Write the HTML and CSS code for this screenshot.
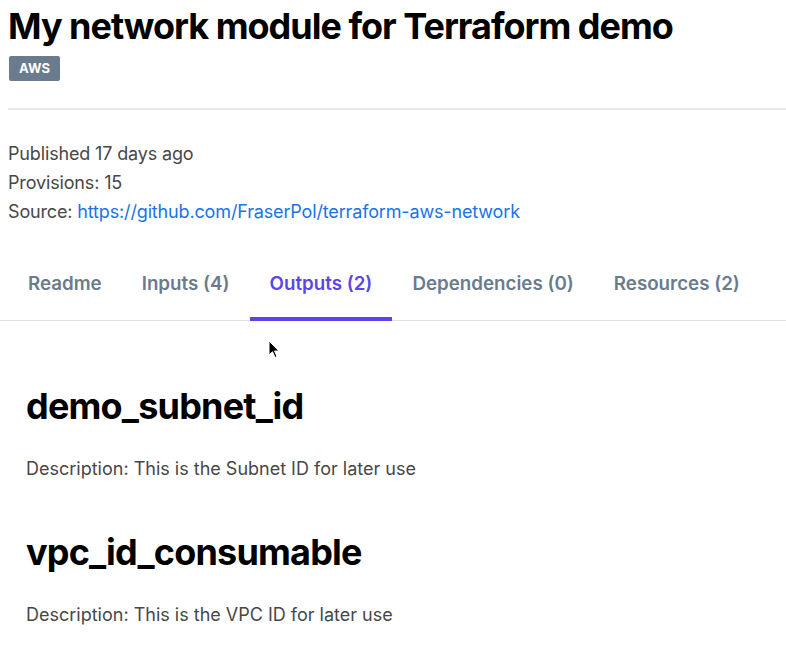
FILE: index.html
```html
<!DOCTYPE html>
<html lang="en">
<head>
<meta charset="utf-8">
<title>My network module for Terraform demo</title>
<link rel="stylesheet" href="styles.css">
</head>
<body>
<header class="head">
  <h1 class="title">My network module for Terraform demo</h1>
  <span class="badge">AWS</span>
</header>
<hr class="rule">
<section class="meta">
  <p>Published 17 days ago</p>
  <p>Provisions: 15</p>
  <p>Source: <a href="#">https://github.com/FraserPol/terraform-aws-network</a></p>
</section>
<nav class="tabs">
  <a class="tab" href="#">Readme</a>
  <a class="tab" href="#">Inputs (4)</a>
  <a class="tab active" href="#">Outputs (2)</a>
  <a class="tab" href="#">Dependencies (0)</a>
  <a class="tab" href="#">Resources (2)</a>
</nav>
<main class="outputs">
  <article class="output">
    <h2>demo_subnet_id</h2>
    <p>Description: This is the Subnet ID for later use</p>
  </article>
  <article class="output">
    <h2>vpc_id_consumable</h2>
    <p>Description: This is the VPC ID for later use</p>
  </article>
</main>
<svg class="cursor" width="14" height="20" viewBox="0 0 14 20"><path d="M1 1 L1 15 L4.5 11.8 L7 17.5 L9 16.6 L6.6 11 L11 11 Z" fill="#000" stroke="#fff" stroke-width="1"/></svg>
</body>
</html>
```
FILE: styles.css
```css
html, body { margin: 0; padding: 0; }
body {
  font-family: Inter, "Noto Sans", sans-serif;
  color: #000;
  background: #fff;
  overflow: hidden;
  position: relative;
  width: 786px;
  height: 651px;
}
.head { padding: 0 8px; }
.title {
  margin: 0;
  padding-top: 4px;
  font-size: 36px;
  line-height: 44px;
  font-weight: 700;
  letter-spacing: -1px;
}
.badge {
  display: inline-block;
  margin-top: 8px;
  margin-left: 1px;
  background: #6b7b8e;
  color: #fff;
  font-size: 13px;
  font-weight: 700;
  letter-spacing: 0.2px;
  line-height: 25px;
  padding: 0 10px;
  border-radius: 2px;
}
.rule {
  margin: 27px 0 0 8px;
  border: 0;
  border-top: 2px solid #e8e8e8;
}
.meta { padding: 29px 8px 0; }
.meta p {
  margin: 0;
  font-size: 18px;
  line-height: 29px;
  letter-spacing: -0.15px;
  color: #474747;
}
.meta a { color: #1a73e8; text-decoration: none; }
.tabs {
  display: flex;
  margin-top: 34px;
  padding-left: 8px;
  border-bottom: 1px solid #e0e0e0;
}
.tab {
  padding: 13px 20px 22px;
  font-size: 18.75px;
  line-height: 22px;
  font-weight: 600;
  color: #6b7b8e;
  text-decoration: none;
  border-bottom: 4px solid transparent;
  margin-bottom: -1px;
}
.tab.active { color: #5c45e8; border-bottom-color: #5c45e8; }
.outputs { padding: 63px 26px 0; }
.output h2 {
  margin: 0;
  font-size: 36px;
  line-height: 44px;
  font-weight: 700;
  letter-spacing: -0.8px;
}
.output p {
  margin: 30px 0 50px;
  font-size: 18px;
  line-height: 22px;
  color: #474747;
}
.cursor { position: absolute; left: 268px; top: 340px; }
```
